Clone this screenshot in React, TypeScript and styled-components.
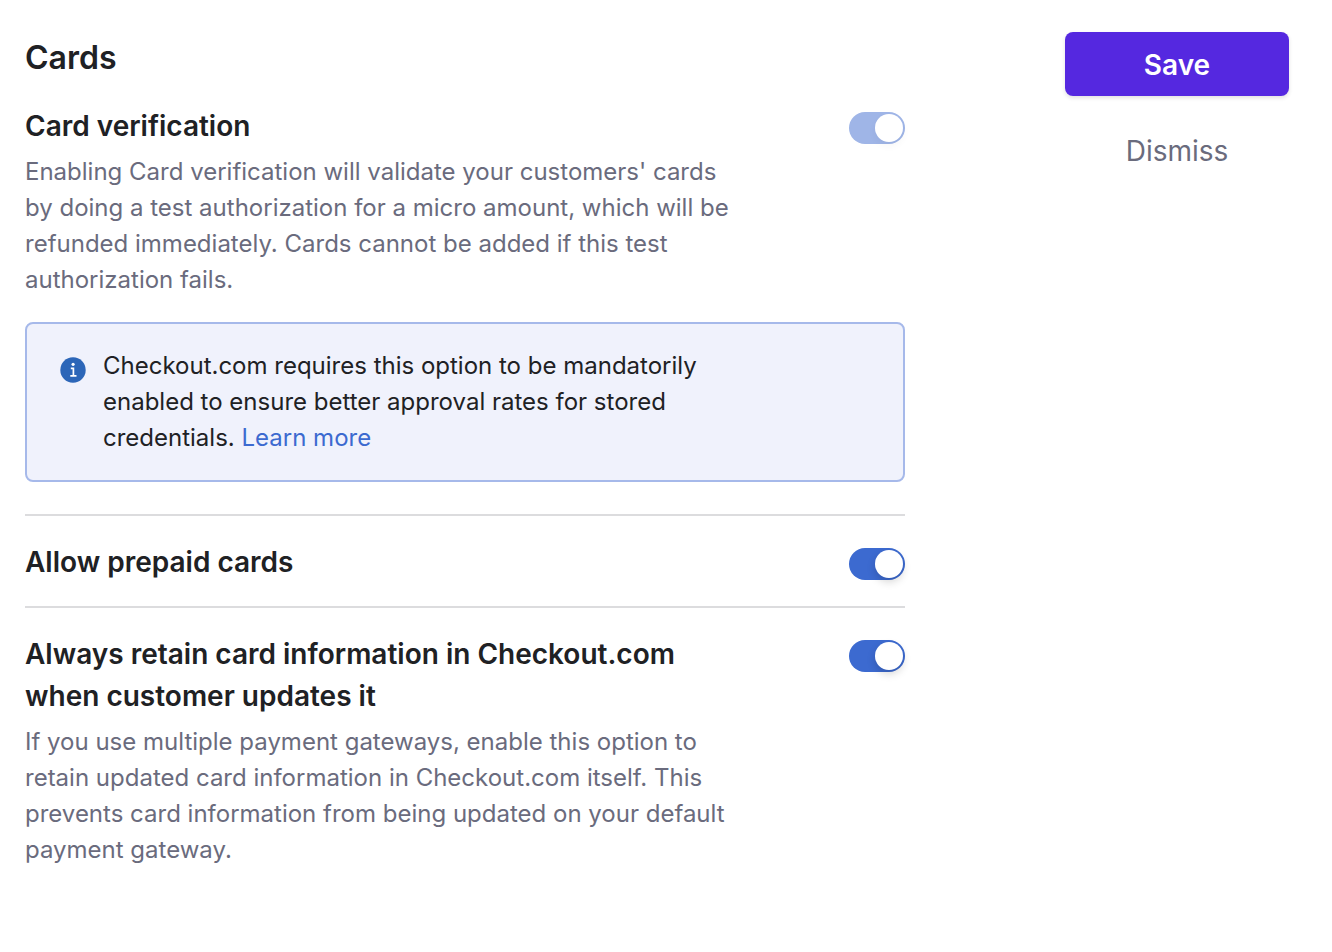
import React, { useState } from "react";
import styled, { createGlobalStyle } from "styled-components";

const GlobalStyle = createGlobalStyle`
  *, *::before, *::after { box-sizing: border-box; }
  body {
    margin: 0;
    background: #ffffff;
    color: #202124;
    font-family: Inter, "Liberation Sans", sans-serif;
  }
`;

const Page = styled.div`
  display: flex;
  justify-content: space-between;
  align-items: flex-start;
  gap: 48px;
  padding: 32px 43px 48px 25px;
`;

const Settings = styled.main`
  flex: 0 1 880px;
  min-width: 0;
`;

const PageTitle = styled.h1`
  margin: 0;
  padding-top: 2px;
  font-size: 32px;
  line-height: 48px;
  font-weight: 600;
`;

const Setting = styled.section<{ $divided?: boolean }>`
  display: flex;
  justify-content: space-between;
  align-items: flex-start;
  padding: ${(p) => (p.$divided ? "25px 0 23px" : "23px 0 24px")};
  border-top: ${(p) => (p.$divided ? "2px solid #dcdcde" : "none")};
`;

const SettingText = styled.div`
  flex: 0 1 704px;
`;

const SettingTitle = styled.h2`
  margin: 0;
  font-size: 28px;
  line-height: 42px;
  font-weight: 600;
`;

const Description = styled.p`
  margin: 7px 0 0;
  color: #6a6b7d;
  font-size: 24px;
  line-height: 36px;
`;

const Switch = styled.input`
  appearance: none;
  flex: none;
  display: flex;
  justify-content: flex-start;
  width: 56px;
  height: 32px;
  margin: 7px 0 0;
  padding: 2px;
  border-radius: 16px;
  background: #c4c4cc;
  cursor: pointer;

  &::before {
    content: "";
    width: 28px;
    height: 28px;
    border-radius: 50%;
    background: #ffffff;
    box-shadow: 0 4px 8px rgba(0, 0, 0, 0.16);
  }
  &:checked {
    justify-content: flex-end;
    background: #3c6ad0;
  }
  &:disabled {
    background: #9fb5e7;
    cursor: default;
  }
  &:disabled::before {
    box-shadow: 0 4px 8px rgba(0, 0, 0, 0.04);
  }
`;

const Notice = styled.aside`
  display: flex;
  gap: 16px;
  margin-bottom: 32px;
  padding: 24px 32px;
  border: 2px solid #a6b9ea;
  border-radius: 8px;
  background: #f0f2fc;
`;

const InfoIcon = styled.svg`
  flex: none;
  width: 28px;
  height: 28px;
  margin-top: 8px;
`;

const NoticeText = styled.p`
  margin: 0;
  max-width: 620px;
  font-size: 24px;
  line-height: 36px;
`;

const Link = styled.a`
  color: #3c6ad0;
  text-decoration: none;
`;

const Actions = styled.div`
  flex: 0 0 224px;
  display: flex;
  flex-direction: column;
  gap: 22px;
`;

const Button = styled.button<{ $primary?: boolean }>`
  height: 64px;
  padding: 1px 0 0;
  border: 0;
  border-radius: 8px;
  background: ${(p) => (p.$primary ? "#5528e0" : "transparent")};
  color: ${(p) => (p.$primary ? "#ffffff" : "#6a6b7d")};
  box-shadow: ${(p) => (p.$primary ? "0 2px 4px rgba(0, 0, 0, 0.12)" : "none")};
  font-family: inherit;
  font-size: 28px;
  font-weight: ${(p) => (p.$primary ? 600 : 400)};
  cursor: pointer;
`;

export default function App() {
  const [prepaid, setPrepaid] = useState(true);
  const [retain, setRetain] = useState(true);
  return (
    <>
      <GlobalStyle />
      <Page>
        <Settings>
          <PageTitle>Cards</PageTitle>
          <Setting>
            <SettingText>
              <SettingTitle><label htmlFor="verification">Card verification</label></SettingTitle>
              <Description>
                Enabling Card verification will validate your customers' cards
                by doing a test authorization for a micro amount, which will be
                refunded immediately. Cards cannot be added if this test
                authorization fails.
              </Description>
            </SettingText>
            <Switch id="verification" type="checkbox" role="switch" checked disabled readOnly />
          </Setting>
          <Notice>
            <InfoIcon viewBox="0 0 28 28" aria-hidden="true">
              <circle cx="14" cy="14" r="12.7" fill="#2c66b8" />
              <circle cx="14.1" cy="8.3" r="1.6" fill="#fff" />
              <path d="M11.8 12.4h2.6v7.4M11.3 19.9h6.2" fill="none" stroke="#fff" strokeWidth="1.7" />
            </InfoIcon>
            <NoticeText>
              Checkout.com requires this option to be mandatorily enabled to
              ensure better approval rates for stored credentials.{" "}
              <Link href="#learn-more">Learn more</Link>
            </NoticeText>
          </Notice>
          <Setting $divided>
            <SettingText>
              <SettingTitle><label htmlFor="prepaid">Allow prepaid cards</label></SettingTitle>
            </SettingText>
            <Switch id="prepaid" type="checkbox" role="switch" checked={prepaid} onChange={(e) => setPrepaid(e.target.checked)} />
          </Setting>
          <Setting $divided>
            <SettingText>
              <SettingTitle>
                <label htmlFor="retain">
                  Always retain card information in Checkout.com when customer updates it
                </label>
              </SettingTitle>
              <Description>
                If you use multiple payment gateways, enable this option to
                retain updated card information in Checkout.com itself. This
                prevents card information from being updated on your default
                payment gateway.
              </Description>
            </SettingText>
            <Switch id="retain" type="checkbox" role="switch" checked={retain} onChange={(e) => setRetain(e.target.checked)} />
          </Setting>
        </Settings>
        <Actions>
          <Button $primary type="button">Save</Button>
          <Button type="button">Dismiss</Button>
        </Actions>
      </Page>
    </>
  );
}
